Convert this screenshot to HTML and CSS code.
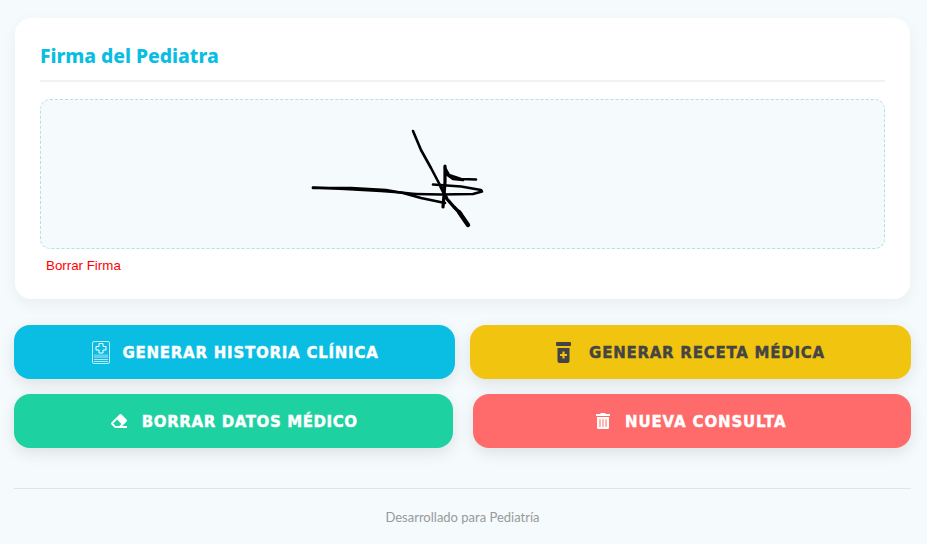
FILE: index.html
```html
<!DOCTYPE html>
<html lang="es">
<head>
    <meta charset="UTF-8">
    <title>Firma del Pediatra</title>
    <link rel="stylesheet" href="styles.css">
</head>
<body>
    <div class="container">
        <section class="card">
            <h2 class="card-title">Firma del Pediatra</h2>
            <div class="signature-pad">
                <svg class="signature" viewBox="0 0 843 148" fill="none" stroke="#000" stroke-linecap="round" stroke-linejoin="round">
                    <path stroke-width="2.600" d="M272 87.500L304 89L340 91L360 92.500L374 94"/>
                    <path stroke-width="2.600" d="M272 88L310 88L345 90L362 93L380 98L404 103"/>
                    <path stroke-width="2.600" d="M374 94L400 94.500L432 94L441 91.500L440 90L420 86.500L392 84.500"/>
                    <path stroke-width="2.600" d="M372 31L380 50L390 68L400 87"/>
                    <path stroke-width="3.400" d="M400 87L406 99L413 107L420 114"/>
                    <path stroke-width="4.400" d="M418 112L427 125"/>
                    <path stroke-width="3.200" d="M404 66L404 82L403 95L402 107"/>
                    <path stroke-width="2.600" d="M404 68L408 75L420 79L435 79.500"/>
                    <path stroke-width="2.600" d="M405 74L412 79L422 80"/>
                </svg>
            </div>
            <button class="clear-btn" type="button">Borrar Firma</button>
        </section>

        <div class="btn-row">
            <button class="btn btn-blue" type="button">
                <svg class="icon" width="18" height="23" viewBox="0 0 18 23" fill="none" stroke="#c4eef9" stroke-width="1">
                    <rect x="0.500" y="0.500" width="17" height="22" rx="1.500"/>
                    <path stroke="#fff" d="M7 2.500h4v3h3v3.500h-3v3h-4v-3h-3v-3.500h3z"/>
                    <path fill="#5fd3ee" stroke="none" d="M2 13.500h14v3.500h-14z"/>
                    <path stroke="#a9e8f7" d="M2 18.500h14M2 20.500h14"/>
                </svg>
                <span>Generar Historia Clínica</span>
            </button>
            <button class="btn btn-yellow" type="button">
                <svg class="icon" width="15" height="21" viewBox="0 0 15 21">
                    <rect x="0" y="0" width="15" height="4" rx="1" fill="#444"/>
                    <path fill="#444" d="M1.500 6h12v13a2 2 0 0 1-2 2h-8a2 2 0 0 1-2-2z"/>
                    <path fill="#f1c40f" d="M6.400 9.500h2.200v2.400h2.400v2.200h-2.400v2.400h-2.200v-2.400h-2.400v-2.200h2.400z"/>
                </svg>
                <span>Generar Receta Médica</span>
            </button>
        </div>

        <div class="btn-row btn-row-wide">
            <button class="btn btn-green" type="button">
                <svg class="icon" width="16" height="16" viewBox="0 0 512 512" fill="#fff">
                    <path d="M497.941 273.941c18.745-18.745 18.745-49.137 0-67.882l-160-160c-18.745-18.745-49.137-18.745-67.882 0l-256 256c-18.745 18.745-18.745 49.137 0 67.882l96 96A48.004 48.004 0 0 0 144 480h356c6.627 0 12-5.373 12-12v-40c0-6.627-5.373-12-12-12H355.883l142.058-142.059zm-302.627-62.627l137.373 137.373L265.373 416H150.628l-80-80 124.686-124.686z"/>
                </svg>
                <span>Borrar Datos Médico</span>
            </button>
            <button class="btn btn-red" type="button">
                <svg class="icon" width="14" height="16" viewBox="0 0 448 512" fill="#fff">
                    <path d="M32 464a48 48 0 0 0 48 48h288a48 48 0 0 0 48-48V128H32zm272-256a16 16 0 0 1 32 0v224a16 16 0 0 1-32 0zm-96 0a16 16 0 0 1 32 0v224a16 16 0 0 1-32 0zm-96 0a16 16 0 0 1 32 0v224a16 16 0 0 1-32 0zM432 32H312l-9.400-18.700A24 24 0 0 0 281.100 0H166.800a23.720 23.720 0 0 0-21.400 13.300L136 32H16A16 16 0 0 0 0 48v32a16 16 0 0 0 16 16h416a16 16 0 0 0 16-16V48a16 16 0 0 0-16-16z"/>
                </svg>
                <span>Nueva Consulta</span>
            </button>
        </div>

        <footer class="footer">Desarrollado para Pediatría</footer>
    </div>
</body>
</html>
```

FILE: styles.css
```css
* {
    box-sizing: border-box;
}

body {
    margin: 0;
    background-color: #f5fafd;
    font-family: "Lato", sans-serif;
}

.container {
    padding: 18px 16px 0 14px;
}

.card {
    background-color: white;
    margin: 0 1px 26px 1px;
    padding: 25px 25px 19px;
    height: 281px;
    border-radius: 16px;
    box-shadow: 0 5px 15px rgba(0, 0, 0, 0.05);
}

.card-title {
    margin: 0 0 17px;
    height: 39px;
    border-bottom: 2px solid #f1f2f6;
    color: #0abde3;
    font-family: "Noto Sans", sans-serif;
    font-size: 19.300px;
    font-weight: 800;
    line-height: 26px;
}

.signature-pad {
    height: 150px;
    background-color: #f5fafd;
    border: 1px dashed #b9dde5;
    border-radius: 10px;
}

.signature {
    display: block;
    width: 100%;
    height: 100%;
}

.clear-btn {
    display: block;
    margin: 8px 0 0;
    padding: 1px 6px;
    border: none;
    background: none;
    color: red;
    font-family: "Liberation Sans", sans-serif;
    font-size: 13.333px;
    line-height: 15px;
}

.btn-row {
    display: flex;
    gap: 15px;
    margin-bottom: 15px;
}

.btn-row-wide {
    gap: 20px;
    margin-bottom: 40px;
}

.btn {
    flex: 1;
    display: flex;
    align-items: center;
    justify-content: center;
    gap: 12px;
    height: 54px;
    padding: 0;
    border: none;
    border-radius: 16px;
    color: white;
    font-family: "DejaVu Sans", sans-serif;
    font-size: 15px;
    font-weight: 700;
    letter-spacing: 0.750px;
    text-transform: uppercase;
    -webkit-text-stroke: 0.400px currentColor;
    box-shadow: 0 5px 15px rgba(0, 0, 0, 0.1);
}

.btn span {
    padding-top: 2px;
}

.icon {
    flex: none;
}

.btn-blue {
    background-color: #0abde3;
}

.btn-blue .icon {
    margin-left: 2px;
}

.btn-yellow {
    background-color: #f1c40f;
    color: #444;
    gap: 18px;
}

.btn-green {
    background-color: #1dd1a1;
    gap: 15px;
    letter-spacing: 0.600px;
}

.btn-green .icon {
    margin-left: 2px;
}

.btn-red {
    background-color: #ff6b6b;
    gap: 15px;
    letter-spacing: 0.850px;
}

.btn-red .icon {
    margin-left: -1px;
}

.footer {
    padding-top: 20px;
    height: 56px;
    border-top: 1px solid #dfe4ea;
    color: #999;
    font-size: 13px;
    line-height: 17px;
    text-align: center;
}
```
